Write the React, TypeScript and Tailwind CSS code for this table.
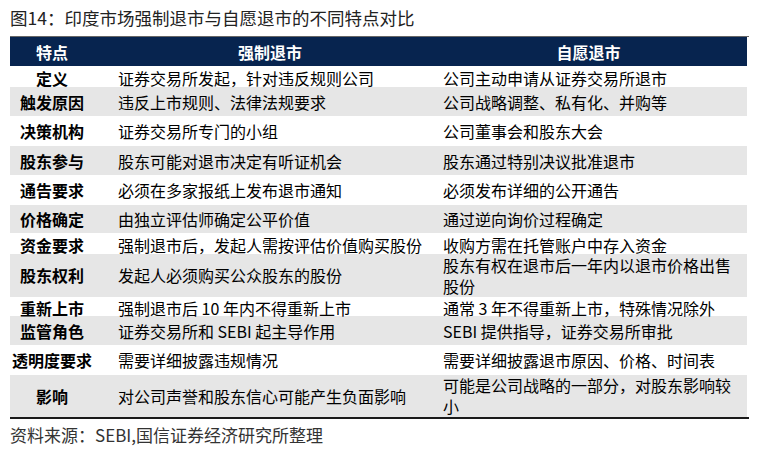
type Row = {
  label: string
  forced: string
  voluntary: string
  h: string
  shade?: boolean
  nudge?: boolean
  wrap?: boolean
}

const rows: Row[] = [
  { label: '定义', forced: '证券交易所发起，针对违反规则公司', voluntary: '公司主动申请从证券交易所退市', h: 'h-[21px]', nudge: true },
  { label: '触发原因', forced: '违反上市规则、法律法规要求', voluntary: '公司战略调整、私有化、并购等', h: 'h-[29px]', shade: true },
  { label: '决策机构', forced: '证券交易所专门的小组', voluntary: '公司董事会和股东大会', h: 'h-[30px]' },
  { label: '股东参与', forced: '股东可能对退市决定有听证机会', voluntary: '股东通过特别决议批准退市', h: 'h-[29px]', shade: true },
  { label: '通告要求', forced: '必须在多家报纸上发布退市通知', voluntary: '必须发布详细的公开通告', h: 'h-[30px]' },
  { label: '价格确定', forced: '由独立评估师确定公平价值', voluntary: '通过逆向询价过程确定', h: 'h-[28px]', shade: true },
  { label: '资金要求', forced: '强制退市后，发起人需按评估价值购买股份', voluntary: '收购方需在托管账户中存入资金', h: 'h-[21px]', nudge: true },
  { label: '股东权利', forced: '发起人必须购买公众股东的股份', voluntary: '股东有权在退市后一年内以退市价格出售股份', h: 'h-[43px]', shade: true, wrap: true },
  { label: '重新上市', forced: '强制退市后 10 年内不得重新上市', voluntary: '通常 3 年不得重新上市，特殊情况除外', h: 'h-[19px]', nudge: true },
  { label: '监管角色', forced: '证券交易所和 SEBI 起主导作用', voluntary: 'SEBI 提供指导，证券交易所审批', h: 'h-[29px]', shade: true },
  { label: '透明度要求', forced: '需要详细披露违规情况', voluntary: '需要详细披露退市原因、价格、时间表', h: 'h-[30px]' },
  { label: '影响', forced: '对公司声誉和股东信心可能产生负面影响', voluntary: '可能是公司战略的一部分，对股东影响较小', h: 'h-[42px]', shade: true, wrap: true },
]

const font = "font-['Noto_Sans_CJK_SC',sans-serif]"

export default function App() {
  return (
    <div className={`w-[761px] h-[452px] bg-white pl-[10px] ${font}`}>
      <div className="h-[36px] flex items-center text-[17.5px] text-[#222] leading-none">
        图14：印度市场强制退市与自愿退市的不同特点对比
      </div>
      <div className="w-[739px] h-px bg-[#666]" />

      <div className="w-[737px]">
        <div className="h-[29px] bg-[#07244f] grid grid-cols-[100px_320px_317px] items-center text-white font-bold text-[16px] leading-none">
          <div className="text-center pr-[16px]">特点</div>
          <div className="text-center">强制退市</div>
          <div className="text-center">自愿退市</div>
        </div>

        {rows.map((r) => (
          <div
            key={r.label}
            className={`${r.h} ${r.shade ? 'bg-[#e6e6e6]' : ''} ${r.nudge ? 'pt-[2px]' : ''} ${r.wrap ? 'leading-[21px]' : 'leading-[16px]'} grid grid-cols-[100px_320px_317px] items-center text-[16px] text-black`}
          >
            <div className="text-center pr-[16px] font-bold whitespace-nowrap">{r.label}</div>
            <div className="pl-[8px] whitespace-nowrap">{r.forced}</div>
            <div className="pl-[13px] pr-[8px]">{r.voluntary}</div>
          </div>
        ))}
      </div>
      <div className="w-[739px] h-[2px] bg-[#1a1a1a]" />

      <div className="h-[31px] flex items-center text-[17px] text-[#333] leading-none">
        资料来源：SEBI,国信证券经济研究所整理
      </div>
    </div>
  )
}
